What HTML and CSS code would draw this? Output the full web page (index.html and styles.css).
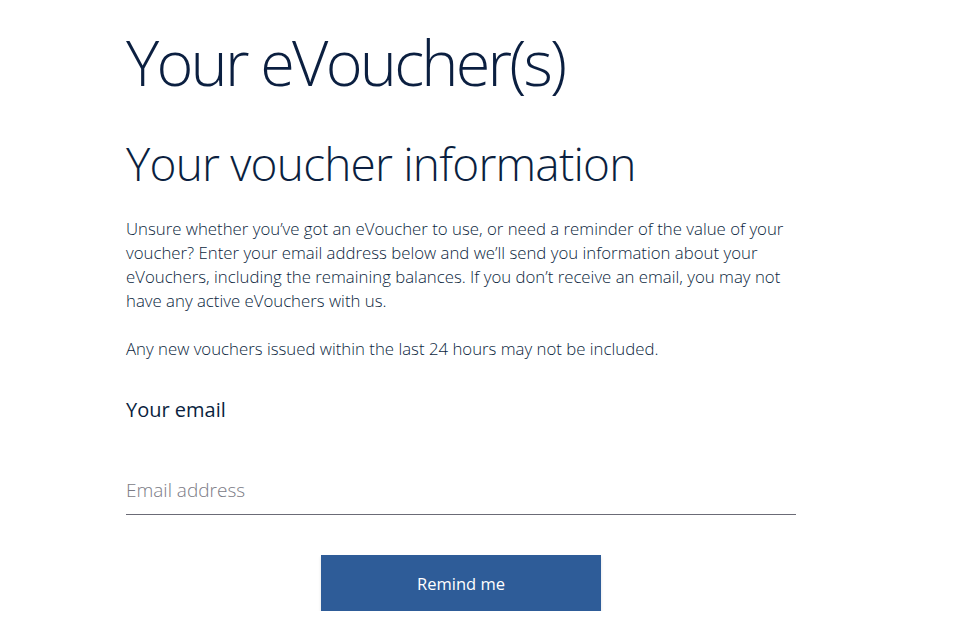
FILE: index.html
```html
<!DOCTYPE html>
<html lang="en">
<head>
<meta charset="utf-8">
<title>Your eVoucher(s)</title>
<link rel="stylesheet" href="styles.css">
</head>
<body>
<main class="page">
  <h1 class="title">Your eVoucher(s)</h1>
  <h2 class="subtitle">Your voucher information</h2>
  <p class="text">Unsure whether you’ve got an eVoucher to use, or need a reminder of the value of your voucher? Enter your email address below and we’ll send you information about your eVouchers, including the remaining balances. If you don’t receive an email, you may not have any active eVouchers with us.</p>
  <p class="text">Any new vouchers issued within the last 24 hours may not be included.</p>
  <form class="form">
    <label class="label" for="email">Your email</label>
    <input class="input" id="email" type="email" placeholder="Email address">
    <div class="actions">
      <button class="button" type="button">Remind me</button>
    </div>
  </form>
</main>
</body>
</html>
```

FILE: styles.css
```css
html, body {
  margin: 0;
  padding: 0;
  background: #ffffff;
}
body {
  font-family: "Open Sans", "Noto Sans", sans-serif;
  color: #0b1f40;
}
.page {
  width: 670px;
  margin: 0 0 0 126px;
  padding-top: 20px;
}
.title {
  margin: 0;
  font-weight: 300;
  font-size: 63px;
  line-height: 84px;
  letter-spacing: -2.8px;
}
.subtitle {
  margin: 29px 0 0;
  font-weight: 300;
  font-size: 46px;
  line-height: 60px;
  letter-spacing: -0.8px;
}
.text {
  margin: 24px 0 0;
  font-size: 16.8px;
  font-weight: 300;
  line-height: 24px;
}
.form {
  margin-top: 37px;
  display: flex;
  flex-direction: column;
}
.label {
  font-size: 20px;
  font-weight: 400;
  line-height: 24px;
}
.input {
  margin-top: 55px;
  border: none;
  border-bottom: 1px solid #6b6b76;
  padding: 0 0 11px;
  font-family: inherit;
  font-size: 19px;
  font-weight: 300;
  color: #0b1f40;
  outline: none;
  background: transparent;
}
.input::placeholder {
  color: #7b7b85;
}
.actions {
  display: flex;
  justify-content: center;
  margin-top: 40px;
}
.button {
  width: 280px;
  height: 56px;
  border: none;
  background: #2e5c98;
  color: #ffffff;
  font-family: inherit;
  font-size: 16.5px;
  font-weight: 400;
  box-shadow: 0 2px 3px rgba(0,0,0,0.12);
}
```
